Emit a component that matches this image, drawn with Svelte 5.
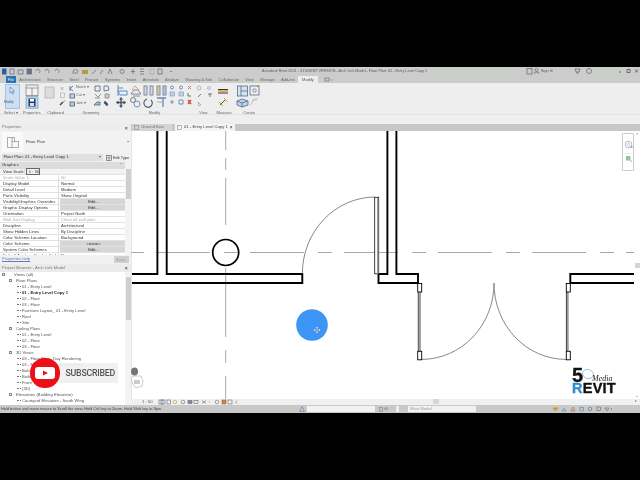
<script>
  const tabs = ['Architecture','Structure','Steel','Precast','Systems','Insert','Annotate','Analyze','Massing & Site','Collaborate','View','Manage','Add-Ins'];
  const props = [
    ['View Scale','1 : 50','input'],['Scale Value  1:','50','dim'],['Display Model','Normal',''],['Detail Level','Medium',''],
    ['Parts Visibility','Show Original',''],['Visibility/Graphics Overrides','Edit...','btn'],['Graphic Display Options','Edit...','btn'],
    ['Orientation','Project North',''],['Wall Join Display','Clean all wall joins','dim'],['Discipline','Architectural',''],
    ['Show Hidden Lines','By Discipline',''],['Color Scheme Location','Background',''],['Color Scheme','<none>','btn'],
    ['System Color Schemes','Edit...','btn'],['Default Analysis Display Style','None','']
  ];
  const tree = [
    ['Views (all)','l0'],['Floor Plans','l1'],['01 - Entry Level','l2'],['01 - Entry Level Copy 1','l2 bold'],['02 - Floor','l2'],['03 - Floor','l2'],
    ['Furniture Layout_ 01 - Entry Level','l2'],['Roof','l2'],['Site','l2'],['Ceiling Plans','l1'],['01 - Entry Level','l2'],['02 - Floor','l2'],['03 - Floor','l2'],
    ['3D Views','l1'],['03 - Floor Plan - Day Rendering','l2'],['03 - Floor Plan - Night Rendering','l2'],['Balcony','l2'],['Building','l2'],['Front','l2'],['{3D}','l2'],
    ['Elevations (Building Elevation)','l1'],['Courtyard Elevation - South Wing','l2']
  ];
</script>

<div class="page">
  <div class="black"></div>
  <div class="revit">
    <header class="title">
      <svg class="qat" viewBox="0 67 180 9" width="180" height="9">
        <rect x="2" y="68.5" width="4.5" height="6" fill="#2b5f9e"/>
        <g fill="none" stroke="#667" stroke-width=".7">
          <rect x="10" y="69" width="4" height="5"/><path d="M18 70h5v4h-5z"/><rect x="27" y="69" width="4.5" height="5" fill="#678"/>
          <path d="M36 71a2 2 0 1 1 3 2M45 71a2 2 0 1 1 3 2M55 71a2 2 0 1 1 3 2"/>
          <path d="M72 73h6M73 72a2.500 2.500 0 0 1 5 0"/><rect x="82" y="70" width="6" height="4" fill="#b89a45" stroke="none"/>
          <path d="M92 74l4-4M100 74l3-4"/><path d="M108 74l2-5 2 5"/><circle cx="122" cy="71.500" r="2"/><path d="M133 69v5M131 71.500h4"/>
          <path d="M140 69h4M140 71.500h4M140 74h4"/><rect x="150" y="69" width="4" height="5" stroke="#aaa"/><rect x="158" y="69" width="4" height="5"/><path d="M170 71l1 1 1-1"/>
        </g>
      </svg>
      <span class="t-text">Autodesk Revit 2021 - STUDENT VERSION - Arch Link Model - Floor Plan: 01 - Entry Level Copy 1</span>
      <svg class="t-right" viewBox="520 67 120 9" width="120" height="9">
        <g fill="none" stroke="#666" stroke-width=".7">
          <rect x="527" y="68.500" width="5" height="5.500"/><circle cx="536.500" cy="70" r="1.500"/><path d="M534 74a2.500 2 0 0 1 5 0"/>
          <path d="M575 69h5l-1 3h-3zM576 73h3"/><circle cx="589" cy="71" r="2.500"/>
          <path d="M619 72h2M627 72.500v-3h3v3zM635 69.500l3 3m0-3l-3 3" stroke="#444"/>
        </g>
      </svg>
      <span class="signin">Sign In</span>
    </header>

    <nav class="tabs">
      <span class="file">File</span>
      {#each tabs as t}<span>{t}</span>{/each}
      <span class="active">Modify</span>
      <svg viewBox="0 0 9 7" width="9" height="7"><rect x="1" y="2" width="4" height="3" fill="none" stroke="#666" stroke-width=".6"/><path d="M6.500 3.500l1 1 1-1" fill="none" stroke="#666" stroke-width=".5"/></svg>
    </nav>

    <section class="ribbon">
      <div class="panel p-select">
        <svg viewBox="0 84 40 25" width="40" height="25">
          <rect x="3.500" y="84.500" width="14" height="24" fill="#cde0f3" stroke="#8fb2d6" stroke-width=".7"/>
          <path d="M8 87v6l1.500-1.500 1 2.500 1-.4-1-2.500h2z" fill="#eef" stroke="#4a6c94" stroke-width=".6"/>
          <rect x="24" y="85" width="12" height="10.500" fill="#f2f2f2" stroke="#777" stroke-width=".7"/><path d="M24 88h12M30 88v7.500" stroke="#777" stroke-width=".7"/>
          <rect x="24" y="96.700" width="12" height="11.500" fill="#b9d5ee" stroke="#7a9cc0" stroke-width=".7"/>
          <rect x="26.500" y="98.500" width="7" height="8" fill="#1f3f66"/><rect x="28" y="99" width="4" height="2.500" fill="#fff"/><rect x="28" y="103" width="4" height="3" fill="#dde"/>
        </svg>
        <div class="names"><span>Select ▾</span><span>Properties</span></div>
        <b class="modlbl">Modify</b>
      </div>
      <div class="panel p-clip">
        <svg viewBox="44 84 23 25" width="23" height="25">
          <rect x="45" y="87" width="9" height="11" fill="#ddd" stroke="#aaa" stroke-width=".7"/>
          <path d="M60.500 87l3 3m0-3l-3 3" stroke="#999" stroke-width=".7"/>
          <rect x="60.500" y="93" width="4" height="4.500" fill="#eee" stroke="#aaa" stroke-width=".6"/>
          <path d="M60 105l3-3" stroke="#264a78" stroke-width="1.500"/><path d="M63 101.500l2-1.500 .5 1-2 1.500z" fill="#cfa93c"/>
        </svg>
        <span class="plbl">Clipboard</span>
      </div>
      <div class="panel p-geo">
        <svg viewBox="67 84 48 25" width="48" height="25">
          <g fill="none" stroke="#4d5f79" stroke-width=".8">
            <path d="M70 86v5M70 88.500l3-2.500M70 88.500l3 2.500"/>
            <rect x="70" y="94" width="4.500" height="4" fill="#c5d6ea"/><rect x="70" y="102" width="4.500" height="4" fill="#b5cbe5"/>
            <path d="M95 86h5v5h-5zM104 86h4l1 4-5 1z"/><path d="M95 94l3 3 3-3M95 98h5" stroke="#587"/><path d="M105 94h4v4h-4z" fill="#ccc" stroke="#888"/>
            <path d="M94 105l3-3h3v3z" fill="#a9c0dc"/><path d="M105 101l3 3-1 2-3-3z" fill="#35506e"/>
          </g>
        </svg>
        <div class="gtext"><span>Notch ▾</span><span>Cut ▾</span><span>Join ▾</span></div>
        <span class="plbl">Geometry</span>
      </div>
      <div class="panel p-mod">
        <svg class="soft" viewBox="115 84 85 25" width="85" height="25">
          <g fill="none" stroke-width="1">
            <path d="M118 85v11M118 91h9v4h-7zM118 88h5" stroke="#3f7cc0"/>
            <path d="M131 94h10l-3-4h-4zM133 96h7" stroke="#6b7b8a"/><path d="M132 90l3-4 4 4" stroke="#c1a24d"/>
            <rect x="144" y="86" width="3" height="9" fill="#cfd8e4" stroke="#6a7a90"/><rect x="150" y="86" width="3" height="9" fill="#cfd8e4" stroke="#6a7a90"/>
            <rect x="157" y="86" width="3" height="9" fill="#d9c98c" stroke="#6a7a90"/><rect x="163" y="86" width="3" height="9" fill="#aac5e4" stroke="#6a7a90"/>
            <circle cx="172" cy="87.500" r="1.500" stroke="#4a79ad"/><circle cx="181" cy="87.500" r="1.500" stroke="#4a79ad"/>
            <path d="M188 86l3 3M191 86l-3 3" stroke="#b66"/>
            <rect x="170" y="92" width="4.500" height="4" fill="#b9d0ea" stroke="#5b83ae" stroke-width=".6"/><rect x="179" y="92" width="4.500" height="4" fill="#b9d0ea" stroke="#5b83ae" stroke-width=".6"/><path d="M188 93v3h3" stroke="#556"/>
            <path d="M170 102h4M172 100v4M179 100h4v4h-4z" stroke="#5b83ae"/><path d="M188 100l3 4m0-4l-3 4" stroke="#c9352a" stroke-width="1.500"/>
            <path d="M121 98v9M116.500 102.500h9" stroke="#2c3b4c" stroke-width="1.400"/><path d="M121 97l-2 2.500h4zM121 108l-2-2.500h4zM116 102.500l2.500-2v4zM126 102.500l-2.500-2v4z" fill="#2c3b4c"/>
            <circle cx="133" cy="100" r="2.500" stroke="#667"/><circle cx="137" cy="104" r="3" stroke="#5b83ae"/>
            <path d="M147 99a4.200 4.200 0 1 0 4 1" stroke="#2c3b4c" stroke-width="1.100"/>
            <path d="M157 98h9M163 98v9" stroke="#4a79ad" stroke-width="1.300"/><path d="M157 102h5" stroke="#c1a24d"/>
          </g>
        </svg>
        <span class="plbl shift6">Modify</span>
      </div>
      <div class="panel p-view">
        <svg viewBox="196 84 18 25" width="18" height="25">
          <g fill="none" stroke="#aab" stroke-width=".8">
            <circle cx="199" cy="88" r="2"/><circle cx="209" cy="88" r="1.500"/><path d="M198 97l3-3M208 94h4M210 94v3" stroke="#557"/><path d="M198 102l3 3-2 1z"/>
          </g>
        </svg>
        <span class="plbl shift3">View</span>
      </div>
      <div class="panel p-meas">
        <svg viewBox="214 84 20 25" width="20" height="25">
          <path d="M218 89.500h10M218 93h10" stroke="#222" stroke-width=".9"/><path d="M218 91h10" stroke="#d69a25" stroke-width="1.400"/>
          <path d="M220 105l6-6" stroke="#444" stroke-width=".9"/><path d="M219 102l4 4M224 98l4 4" stroke="#d69a25" stroke-width=".9"/>
        </svg>
        <span class="plbl">Measure</span>
      </div>
      <div class="panel p-create">
        <svg viewBox="234 84 30 25" width="30" height="25">
          <g fill="none" stroke="#536b8c" stroke-width=".8">
            <rect x="237.500" y="86" width="10" height="10" fill="#d6e2ef"/><path d="M241 86v10M241 91h6"/>
            <rect x="250" y="86" width="9" height="9"/><path d="M253 89h3v3h-3z" stroke="#889"/><circle cx="258" cy="86" r="1" fill="#d9842c" stroke="none"/>
            <path d="M237 101l5-2 6 2v4l-6 2-5-2z" fill="#bdd3ea"/><path d="M242 103v4M237 101l5 2 6-2"/>
            <path d="M250 106l4-7 4 0M252 100h5" stroke="#bbb"/>
          </g>
        </svg>
        <span class="plbl">Create</span>
      </div>
    </section>
    <div class="strip"></div>

    <main class="main">
      <aside class="left">
        <div class="ptitle"><span>Properties</span><i>×</i></div>
        <div class="selector">
          <div class="thumb">
            <svg viewBox="0 0 14 13" width="14" height="13"><path d="M1.500 1.500h7v4h4v6h-11zM6 1.500v4h2.500M6 5.500v6" fill="none" stroke="#888" stroke-width=".7"/></svg>
          </div>
          <span class="fp">Floor Plan</span><i class="dot">▪</i>
        </div>
        <div class="instance">
          <div class="combo"><span>Floor Plan: 01 - Entry Level Copy 1</span><i>▾</i></div>
          <span class="edit">
            <svg viewBox="0 0 6 6" width="6" height="6"><rect x=".5" y=".5" width="5" height="5" fill="none" stroke="#556" stroke-width=".6"/><path d="M3 .5v5M.5 3h5" stroke="#556" stroke-width=".5"/></svg>
            Edit Type
          </span>
        </div>
        <div class="grid-wrap">
          <div class="grid">
            <div class="group"><b>Graphics</b><i>⌃</i></div>
            {#each props as [k, v, kind]}
              <div class="row {kind}">
                <span class="k">{k}</span>
                <span class="v">{v}</span>
              </div>
            {/each}
          </div>
          <div class="vscroll"><s class="thumb1"></s></div>
        </div>
        <div class="help"><u>Properties help</u><span class="apply">Apply</span></div>
        <div class="ptitle browser"><span>Project Browser - Arch Link Model</span><i>×</i></div>
        <div class="tree-wrap">
          <ul class="tree">
            {#each tree as [label, cls]}
              <li class={cls}>{label}</li>
            {/each}
          </ul>
          <div class="vscroll"><s class="thumb2"></s></div>
          <div class="subscribed">
            <span class="yt"><svg viewBox="0 0 20 12" width="20" height="12"><rect width="20" height="12" rx="3" fill="#fff"/><path d="M8 3.500l5 2.500-5 2.500z" fill="#e8131b"/></svg></span>
            <span class="subtxt">SUBSCRIBED</span>
          </div>
        </div>
      </aside>

      <div class="right">
        <div class="doctabs">
          <span class="dt"><svg viewBox="0 0 5 5" width="5" height="5"><rect x=".4" y=".4" width="4.200" height="4.200" fill="none" stroke="#777" stroke-width=".5"/></svg>Ground floor</span>
          <span class="dt on"><svg viewBox="0 0 5 5" width="5" height="5"><rect x=".4" y=".4" width="4.200" height="4.200" fill="none" stroke="#777" stroke-width=".5"/></svg>01 - Entry Level Copy 1 <b>×</b></span>
        </div>
        <div class="canvas">
          <svg class="plan" viewBox="131 131 509 268" width="509" height="268">
            <g stroke="#a9a9a9" stroke-width="1" fill="none">
              <path d="M62 252.500H640" stroke-dasharray="54 14 14 12"/>
              <path d="M225.700 131v19M225.700 158v12M225.700 178v47M225.700 268v69M225.700 350v13M225.700 376v23"/>
            </g>
            <circle cx="225.700" cy="252.500" r="13" fill="none" stroke="#000" stroke-width="1.700"/>
            <g fill="none" stroke="#000" stroke-width="1.900">
              <path d="M132 274h25.400V131"/>
              <path d="M166.700 131V274H302.300V283H132"/>
              <path d="M387.400 131V274H378.500V283H418V274H396.400V131" />
              <path d="M634 274H570.300V283H634"/>
            </g>
            <g fill="none" stroke="#555" stroke-width=".7">
              <path d="M302.300 274A73 77 0 0 1 375 197"/>
              <path d="M421.500 359.400A72.500 76 0 0 0 494 283"/>
              <path d="M566 359.400A72 76 0 0 1 494 283"/>
            </g>
            <path d="M494 283v8" stroke="#aaa" stroke-width="1"/>
            <g fill="#fff" stroke="#111" stroke-width=".8">
              <rect x="374.700" y="197.300" width="4" height="76.500"/>
            </g>
            <path d="M378 198v76" stroke="#777" stroke-width="1.400"/>
            <g stroke="#999" stroke-width="1.800"><path d="M420 292v59M567.800 292v59"/></g>
            <g stroke="#111" stroke-width=".8"><path d="M418.300 292v59M566.400 292v59"/></g>
            <g fill="#fff" stroke="#000" stroke-width=".9">
              <rect x="417.700" y="283.500" width="4" height="8.500"/><rect x="417.700" y="351.300" width="4" height="8.500"/>
              <rect x="566.300" y="283.500" width="4" height="8.500"/><rect x="566.300" y="351.300" width="4" height="8.500"/>
            </g>
            <circle cx="312" cy="325" r="15.800" fill="#3d95f6"/>
            <path d="M317 327v6M314 330h6" stroke="#dfeaf7" stroke-width="1.400"/><path d="M317 328v4M315 330h4" stroke="#345" stroke-width=".5"/>
            <g>
              <ellipse cx="134.500" cy="371.500" rx="3.500" ry="4" fill="#757575"/>
              <path d="M131 378l3-2 7 0 2 5-1 5-6 2-4-5z" fill="#fff" stroke="#999" stroke-width=".5"/>
              <path d="M135 380v4M137 380v4M139 380v4" stroke="#555" stroke-width=".6"/>
            </g>
          </svg>
          <div class="nav">
            <svg viewBox="0 0 12 38" width="12" height="38">
              <circle cx="5.500" cy="10.500" r="3.300" fill="none" stroke="#aaa" stroke-width=".8"/><circle cx="5.500" cy="10.500" r="1.300" fill="none" stroke="#aaa" stroke-width=".6"/><rect x="7" y="12" width="2.500" height="2" fill="#9cb4cc"/>
              <path d="M1 19.500h10" stroke="#ddd" stroke-width=".5"/>
              <rect x="3" y="22" width="4.500" height="4.500" fill="#9cbf9c"/><path d="M7 26l2 2" stroke="#8a8" stroke-width=".8"/>
            </svg>
          </div>
          <div class="logo">
            <div class="logo-top"><b class="five">5</b><svg class="ball" viewBox="0 0 12 12" width="12" height="12"><ellipse cx="6" cy="6" rx="5.500" ry="4.500" fill="none" stroke="#5a9fcb" stroke-width=".6" transform="rotate(18 6 6)"/></svg><em>Media</em></div>
            <div class="logo-rev"><b class="r">R</b><b>EVIT</b></div>
          </div>
          <div class="cscroll">
            <span class="arr">⌃</span><s></s><span class="arr dn">⌄</span>
          </div>
        </div>
        <div class="viewbar">
          <span class="scale">1 : 50</span>
          <svg viewBox="158 399 85 6" width="85" height="6">
            <g fill="none" stroke="#667" stroke-width=".6">
              <rect x="159" y="400" width="4" height="4"/><rect x="161" y="400" width="4" height="4"/><rect x="167" y="400" width="3.500" height="4"/>
              <circle cx="175" cy="402" r="1.800" stroke="#c8902a"/><circle cx="183" cy="402" r="1.800"/><rect x="188" y="400.500" width="4" height="3" fill="#889"/><rect x="194" y="400.500" width="4" height="3"/><path d="M202 400.500l4 3M202 403.500l4-3"/>
              <path d="M209 402h1"/><circle cx="217" cy="402" r="1.800"/><rect x="222" y="400" width="4" height="4" fill="#c8902a" stroke="#a55"/><rect x="228" y="400" width="4" height="4"/><path d="M237 400.500l-1.500 1.500 1.500 1.500"/>
            </g>
          </svg>
          <div class="hbar"><s></s><i>▸</i></div>
        </div>
      </div>
    </main>

    <footer class="status">
      <span class="hint">Hold button and move mouse to Scroll the view. Hold Ctrl key to Zoom. Hold Shift key to Spin.</span>
      <svg class="si1" viewBox="0 0 6 6" width="6" height="6"><path d="M3 .5l2.500 5h-5z" fill="#bcd" stroke="#567" stroke-width=".5"/></svg>
      <span class="input wide"></span>
      <span class="zero"><svg viewBox="0 0 4 5" width="4" height="5"><rect x=".3" y=".3" width="3.400" height="4.400" fill="none" stroke="#777" stroke-width=".5"/></svg>:0</span>
      <span class="mini"></span>
      <span class="input mm">Main Model</span>
      <svg class="si2" viewBox="557 405 62 8" width="62" height="8">
        <g fill="none" stroke="#667" stroke-width=".6">
          <path d="M557 408h5l-2.500 3z" fill="#e0b030" stroke="#a80"/><path d="M566 411l2-3 2 3z" stroke="#58a"/><path d="M575 411l2-4 2 4z" stroke="#b53"/>
          <rect x="584" y="407.500" width="3.500" height="3.500" stroke="#58a"/><circle cx="594" cy="409" r="1.800"/><rect x="601" y="407" width="3.500" height="3.500"/><path d="M609 408h4l-2 3z"/><path d="M615.500 408v2"/>
        </g>
      </svg>
    </footer>
  </div>
  <div class="black"></div>
</div>

<style>
  :global(body) { margin: 0; background: #000; }
  .page { width: 640px; height: 480px; overflow: hidden; font-family: "Liberation Sans", Arial, sans-serif; color: #444; }
  .black { height: 67px; background: #000; }
  .revit { height: 346px; display: flex; flex-direction: column; background: #eee; filter: blur(.35px); font-size: 4.2px; line-height: 1; overflow: hidden; }
  svg { display: block; flex: none; }

  .title { height: 9px; flex: none; display: flex; align-items: center; background: #cbcdcb; position: relative; }
  .t-text { position: absolute; left: 262px; white-space: nowrap; font-size: 3.75px; color: #5a5a5a; }
  .t-right { margin-left: auto; }
  .signin { position: absolute; left: 541px; font-size: 3.8px; color: #555; }
  .qat { flex: none; }

  .tabs { height: 7px; flex: none; display: flex; align-items: center; gap: 6.300px; background: #cbcdcb; color: #666; padding-left: 6px; white-space: nowrap; font-size: 4px; }
  .tabs .file { width: 10px; height: 7px; line-height: 7px; text-align: center; background: #2a73b8; color: #dfeaf5; margin-right: -3px; }
  .tabs .active { background: #eee; height: 7px; line-height: 7px; padding: 0 4px; margin-left: -3px; color: #555; }

  .ribbon { height: 32px; flex: none; display: flex; background: #eeeeee; border-bottom: 1px solid #e2e2e2; box-sizing: border-box; padding-top: 1px; color: #666; }
  .panel { position: relative; display: flex; flex-direction: column; align-items: center; }
  .plbl { font-size: 3.9px; margin-top: 1.500px; }
  .shift6 { margin-right: 6px; }
  .shift3 { margin-right: 3px; }
  .soft { opacity: .85; }
  .names { display: flex; width: 40px; padding: 1.500px 2px 0; gap: 5px; font-size: 3.9px; box-sizing: border-box; white-space: nowrap; }
  .modlbl { position: absolute; left: 4px; top: 17px; font-weight: 400; font-size: 3.300px; color: #3c5a7d; }
  .p-select { width: 44px; }
  .p-clip { width: 23px; }
  .p-geo { width: 48px; }
  .p-mod { width: 85px; }
  .p-view { width: 18px; margin-left: -4px; }
  .p-meas { width: 20px; }
  .p-create { width: 30px; }
  .gtext { position: absolute; left: 9px; top: 2px; display: flex; flex-direction: column; gap: 4.100px; font-size: 3.800px; }

  .strip { height: 9px; flex: none; background: #efefef; }
  .main { flex: 1; min-height: 0; display: flex; }

  .left { width: 131px; flex: none; display: flex; flex-direction: column; background: #f0f0f0; }
  .ptitle { height: 7px; flex: none; display: flex; align-items: center; justify-content: space-between; padding: 0 3px 0 2px; color: #777; background: #ededed; }
  .ptitle i { font-style: normal; font-size: 6px; color: #333; }
  .selector { height: 22px; flex: none; display: flex; align-items: center; background: #f2f2f2; }
  .thumb { width: 21px; height: 20px; margin-left: 2px; background: #fafafa; display: flex; align-items: center; justify-content: center; }
  .fp { margin-left: 3px; flex: 1; }
  .dot { font-style: normal; font-size: 4px; margin-right: 2px; color: #333; }
  .instance { height: 9px; flex: none; display: flex; align-items: center; gap: 3px; padding: 0 1.500px; }
  .combo { width: 101px; flex: none; height: 7px; background: #e0e0e0; display: flex; justify-content: space-between; align-items: center; padding: 0 2px; box-sizing: border-box; color: #333; }
  .combo i { font-style: normal; color: #666; }
  .edit { display: flex; align-items: center; gap: 1.500px; color: #333; white-space: nowrap; font-size: 3.900px; }

  .grid-wrap { height: 93px; flex: none; display: flex; overflow: hidden; }
  .grid { flex: 1; min-width: 0; background: #fff; }
  .group { height: 6.500px; display: flex; justify-content: space-between; align-items: center; background: #dcdcdc; padding: 0 3px 0 2px; color: #333; }
  .group b { font-weight: 400; }
  .group i { font-style: normal; color: #777; }
  .row { display: flex; height: 6.050px; line-height: 6px; border-bottom: .3px solid #e2e2e2; box-sizing: border-box; white-space: nowrap; color: #333; }
  .k { width: 59px; padding-left: 3px; box-sizing: border-box; border-right: .4px solid #ddd; overflow: hidden; flex: none; }
  .v { flex: 1; padding-left: 2px; }
  .row.dim .k, .row.dim .v { color: #aaa; }
  .row.btn .v { text-align: center; background: #d6d6d6; margin: 0 0 0 1px; }
  .row.input .v { outline: .6px solid #666; outline-offset: -.6px; margin-left: 1px; }

  .vscroll { width: 6px; flex: none; background: #f3f3f3; position: relative; }
  .vscroll s { display: block; background: #cfcfcf; width: 5px; margin: 0 auto; }
  .thumb1 { height: 30px; margin-top: 7px !important; }
  .thumb2 { height: 43px; margin-top: 5px !important; }

  .help { height: 9px; flex: none; display: flex; align-items: center; justify-content: space-between; padding: 0 1.500px 0 2px; background: #f1f1f1; }
  .help u { color: #5a7fb5; }
  .apply { width: 15px; height: 7px; background: #d0d0d0; color: #aaa; text-align: center; line-height: 7px; margin-right: 1px; }
  .browser { height: 8px; background: #ebebeb; }

  .tree-wrap { flex: 1; min-height: 0; display: flex; position: relative; overflow: hidden; }
  .tree { flex: 1; margin: 0; padding: 0; list-style: none; background: #fff; }
  .tree li { height: 6px; line-height: 6px; white-space: nowrap; color: #555; }
  .tree li:first-child { margin-top: -.500px; }
  .tree li::before { content: ""; display: inline-block; vertical-align: middle; box-sizing: border-box; }
  .l0 { padding-left: 2px; }
  .l0::before { width: 3.300px; height: 3.300px; border: .4px solid #888; margin-right: 8.700px; }
  .l1 { padding-left: 8.700px; }
  .l1::before { width: 3.300px; height: 3.300px; border: .4px solid #888; margin-right: 4px; }
  .l2 { padding-left: 17px; }
  .l2::before { width: 4px; height: 0; border-top: .5px dotted #777; margin-right: 1px; }
  .tree .bold { font-weight: 700; color: #222; }

  .subscribed { position: absolute; left: 30px; top: 86px; height: 30px; display: flex; align-items: center; }
  .yt { width: 29.500px; height: 29.500px; border-radius: 50%; background: #ec0f17; display: flex; align-items: center; justify-content: center; position: relative; z-index: 1; }
  .subtxt { height: 20px; margin-left: -14px; padding: 0 3px 0 20px; background: rgba(240,240,240,.92); font: 500 8.800px/20px Roboto, "Liberation Sans", sans-serif; letter-spacing: -.25px; color: #555; }

  .right { flex: 1; min-width: 0; display: flex; flex-direction: column; }
  .doctabs { height: 7px; flex: none; display: flex; background: #c6c8c6; padding-left: 1px; gap: 3px; }
  .dt { display: flex; align-items: center; gap: 2px; padding: 0 1px 0 2px; width: 40px; box-sizing: border-box; color: #777; background: #d4d4d4; white-space: nowrap; }
  .dt.on { background: #f5f5f5; width: 60px; color: #444; }
  .dt b { font-weight: 400; font-size: 5px; color: #222; }

  .canvas { height: 268px; flex: none; position: relative; background: #fff; overflow: hidden; box-shadow: inset 1px 0 0 #e6e6e6; }
  .plan { position: absolute; left: 0; top: 0; }
  .nav { position: absolute; left: 491px; top: 2px; width: 12px; height: 38px; background: #fff; border: .5px solid #ccc; border-radius: 1px; box-sizing: border-box; }
  .logo { position: absolute; left: 441px; top: 236px; width: 56px; }
  .logo-top { display: flex; align-items: flex-end; height: 16px; }
  .five { font: 900 20px/16px "Liberation Sans", sans-serif; color: #111; width: 11px; -webkit-text-stroke: .3px #111; }
  .ball { margin: 0 0 3px -1px; }
  .logo-top em { font: italic 8px/8px "Liberation Serif", serif; color: #222; margin-left: -2px; }
  .logo-rev { font: 900 14.500px/11px "Liberation Sans", sans-serif; color: #111; letter-spacing: .25px; display: flex; -webkit-text-stroke: .4px #111; }
  .logo-rev b { font-weight: 900; }
  .logo-rev .r { color: #2f8fd0; -webkit-text-stroke: .4px #2f8fd0; }
  .cscroll { position: absolute; right: 0; top: 0; bottom: 0; width: 6px; background: #fff; }
  .cscroll s { position: absolute; top: 132px; left: 1px; width: 4.500px; height: 5px; background: #d4d4d4; }
  .arr { position: absolute; top: 2px; left: 1px; font-size: 5px; color: #777; }
  .arr.dn { top: auto; bottom: 1px; }

  .viewbar { height: 6px; flex: none; display: flex; align-items: center; background: #f0f0f0; color: #555; position: relative; }
  .scale { width: 27px; padding-left: 11px; box-sizing: border-box; }
  .hbar { flex: 1; height: 6px; position: relative; }
  .hbar s { position: absolute; left: 190px; top: 0; width: 6px; height: 5px; background: #d6d6d6; }
  .hbar i { position: absolute; right: 3px; top: 0; font-style: normal; font-size: 4px; color: #888; }

  .status { height: 8px; flex: none; display: flex; align-items: center; background: #c9c9c9; color: #444; white-space: nowrap; }
  .hint { width: 298px; padding-left: 1px; box-sizing: border-box; font-size: 3.900px; }
  .si1 { margin-left: 1px; }
  .input { height: 6px; background: #f2f2f2; display: block; box-sizing: border-box; }
  .wide { width: 68px; margin-left: 2px; }
  .zero { display: flex; align-items: center; gap: 1px; margin-left: 4px; width: 17px; }
  .mini { width: 3px; height: 6px; background: #eee; margin-left: 0; }
  .mm { width: 68px; margin-left: 9px; padding-left: 2px; line-height: 6px; color: #999; }
  .si2 { margin-left: 77px; }
</style>
